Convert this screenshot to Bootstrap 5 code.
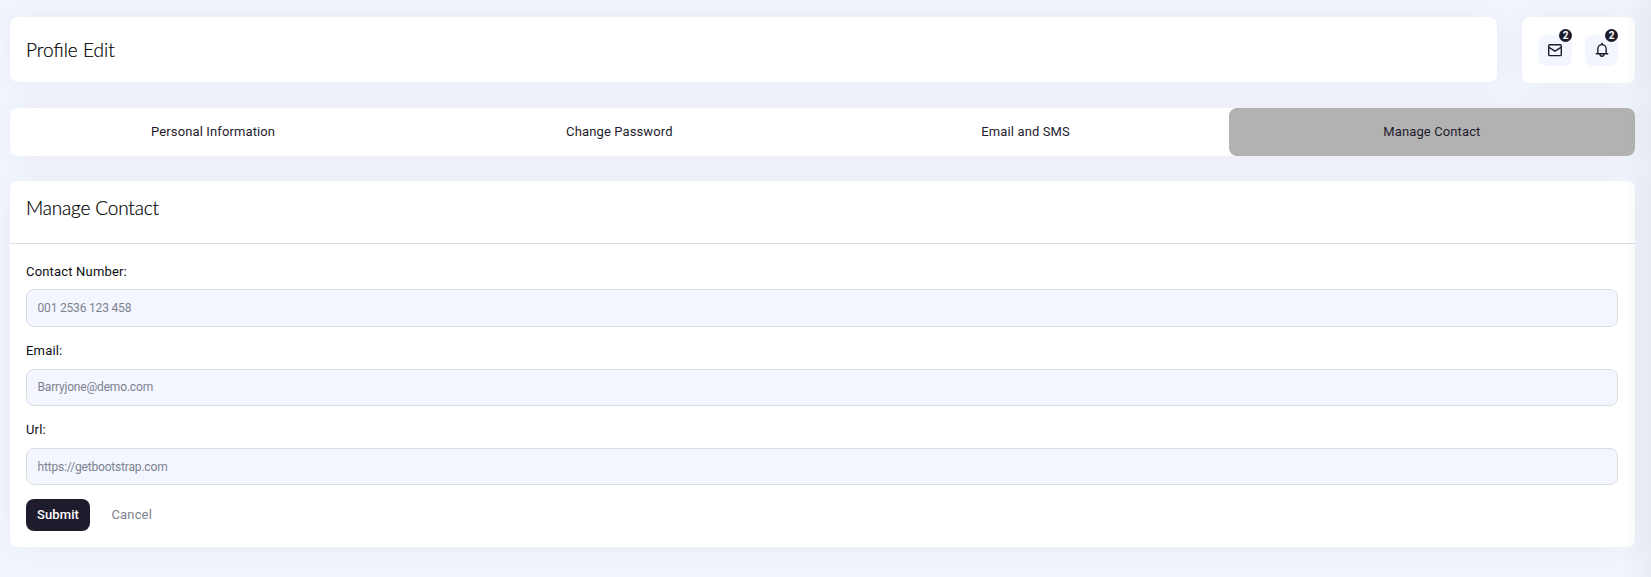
<!DOCTYPE html>
<html lang="en">
<head>
<meta charset="utf-8">
<meta name="viewport" content="width=device-width, initial-scale=1">
<title>Profile Edit</title>
<link href="https://cdn.jsdelivr.net/npm/bootstrap@5.3.0/dist/css/bootstrap.min.css" rel="stylesheet">
<script src="https://cdn.jsdelivr.net/npm/bootstrap@5.3.0/dist/js/bootstrap.bundle.min.js" defer></script>
<style>
body{background:#f2f5fd;font-family:Roboto,sans-serif;font-size:13px;line-height:20px;letter-spacing:.12px;color:#1e1b2c;overflow:hidden}
.page-wrap{padding:17px 16px 0 10px}
.panel{background:#fff;border-radius:8px;box-shadow:0 0 30px rgba(60,64,85,.055)}
.panel-title{font-family:Lato,sans-serif;font-weight:300;font-size:19px;line-height:24px;letter-spacing:0;color:#000;margin:0;-webkit-text-stroke:.2px #000}
.panel-head .panel-title{letter-spacing:-.17px}
.title-bar{height:65px;margin-right:25px}
.tools{width:113px;height:66px;gap:13px;padding-left:16px}
.tool-btn{width:34px;height:31px;border-radius:8px;background:#f3f6ff;color:#1e1b2c}
.tool-btn.bell{width:33px}
.tabs-bar,.main-panel{margin-top:25px}
.count{position:absolute;top:-6px;right:0;width:13px;height:13px;border-radius:50%;background:#1e1b2c;color:#fff;font-size:10px;line-height:13px;font-weight:700;text-align:center;letter-spacing:0}
.tabs-bar .nav-link{height:48px;padding:14px 0;color:#1e1b2c;border-radius:8px}
.tabs-bar .nav-link.active{background:#b2b2b2;color:#1e1b2c}
.panel-head{height:63px;padding:15px 16px;border-bottom:1px solid #dcdde0}
.panel-main{padding:18px 17px 16px 16px}
.form-label{display:block;margin:0 0 7.4px;line-height:20px;letter-spacing:.18px;color:#0d0d12}
.form-control{height:37.5px;border:1px solid #dcdde1;border-radius:8px;background:#f3f6ff;padding:8px 10.5px;font-size:12px;line-height:20px;letter-spacing:-.18px}
.form-control::placeholder{color:#7d8290}
.field{margin-bottom:14.3px}
.field-last{margin-bottom:13.7px}
.btn-main{height:32px;width:64px;padding:0;border-radius:8px;background:#1e1b2c;color:#fff;font-size:13px;font-weight:500;letter-spacing:.1px}
.btn-plain{height:32px;padding:0;border:0;margin-left:21.5px;font-size:13px;letter-spacing:.15px;color:#7d8290}
.edge-shade{position:absolute;top:0;right:0;width:28px;height:100%;pointer-events:none;background:linear-gradient(to right,rgba(60,64,85,0),rgba(60,64,85,.05))}
</style>
</head>
<body class="vh-100 position-relative">
<div class="page-wrap">
  <header class="d-flex align-items-start">
    <div class="panel title-bar flex-grow-1 d-flex align-items-center px-3"><h1 class="panel-title">Profile Edit</h1></div>
    <div class="panel tools d-flex align-items-center">
      <a href="#" class="tool-btn position-relative d-flex align-items-center justify-content-center">
        <svg width="16" height="16" viewBox="0 0 16 16" fill="none" stroke="currentColor" stroke-width="1.4" stroke-linecap="round" stroke-linejoin="round"><rect x="1.7" y="2.7" width="12.6" height="10.9" rx="1.2"/><path d="M2 5.4 8 9.2l6-3.8"/></svg>
        <span class="count">2</span>
      </a>
      <a href="#" class="tool-btn bell position-relative d-flex align-items-center justify-content-center">
        <svg width="16" height="16" viewBox="0 0 16 16" fill="none" stroke="currentColor" stroke-width="1.4" stroke-linecap="round" stroke-linejoin="round"><path d="M2.3 11.8h11.4M3.8 11.8V7.2c0-2.5 1.7-4.7 4.2-4.7s4.2 2.2 4.2 4.7v4.6M8 1.3v1.2M6 12c0 1.3.8 2.3 2 2.3s2-1 2-2.3"/></svg>
        <span class="count">2</span>
      </a>
    </div>
  </header>
  <nav class="panel tabs-bar nav nav-pills nav-justified">
    <a class="nav-item nav-link" href="#">Personal Information</a>
    <a class="nav-item nav-link" href="#">Change Password</a>
    <a class="nav-item nav-link" href="#">Email and SMS</a>
    <a class="nav-item nav-link active" href="#">Manage Contact</a>
  </nav>
  <section class="panel main-panel">
    <div class="panel-head"><h2 class="panel-title">Manage Contact</h2></div>
    <form class="panel-main">
      <div class="field"><label class="form-label" for="cno">Contact Number:</label><input class="form-control" id="cno" placeholder="001 2536 123 458"></div>
      <div class="field"><label class="form-label" for="email">Email:</label><input class="form-control" id="email" placeholder="Barryjone@demo.com"></div>
      <div class="field-last"><label class="form-label" for="url">Url:</label><input class="form-control" id="url" placeholder="https://getbootstrap.com"></div>
      <div class="d-flex"><button type="button" class="btn btn-main">Submit</button><button type="button" class="btn btn-plain">Cancel</button></div>
    </form>
  </section>
</div>
<div class="edge-shade"></div>
</body>
</html>
